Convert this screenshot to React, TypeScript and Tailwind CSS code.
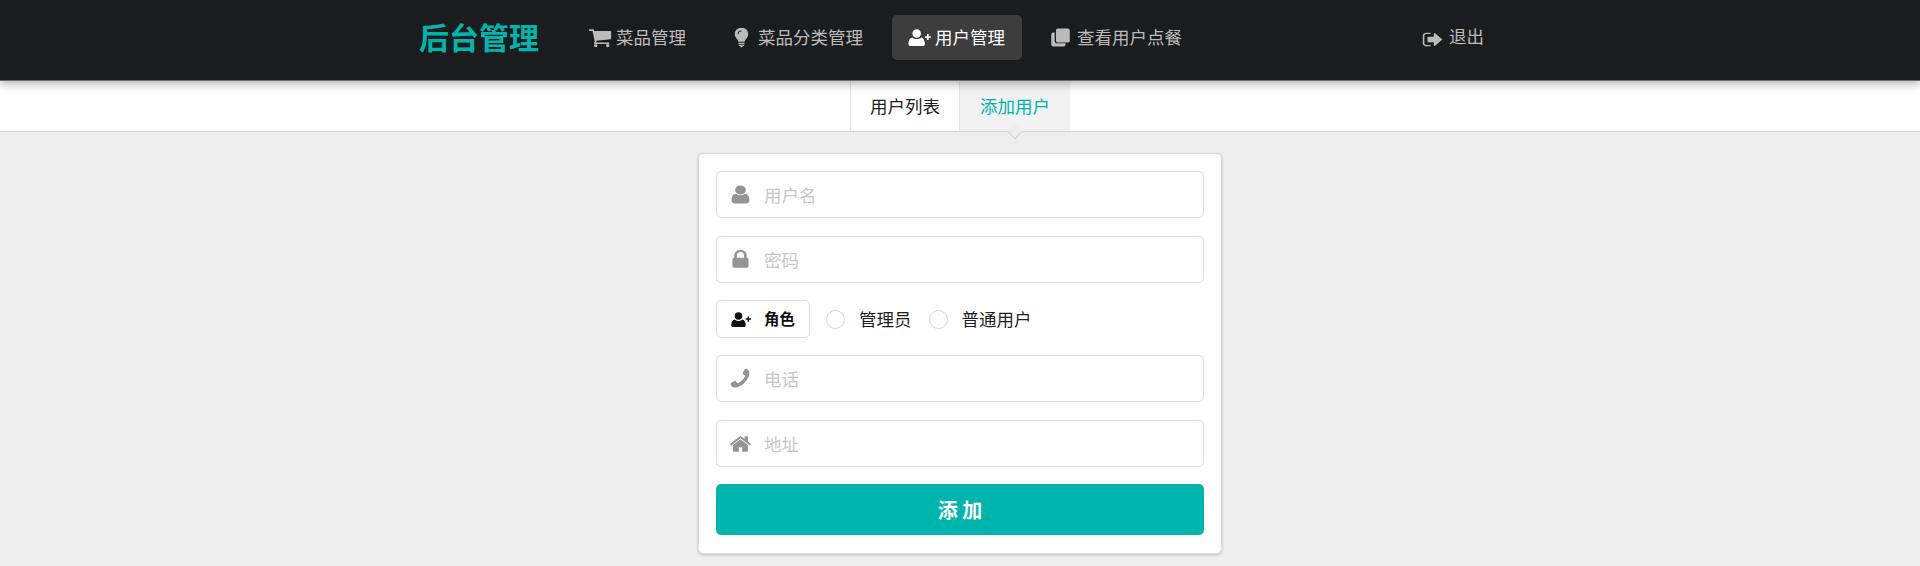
import React from "react";

const P = {
  user: "M1536 1399q0 109-62.5 187t-150.5 78h-854q-88 0-150.5-78t-62.5-187q0-85 8.5-160.5t31.5-152 58.5-131 94-89 134.5-34.5q131 128 313 128t313-128q76 0 134.5 34.5t94 89 58.5 131 31.5 152 8.5 160.5zm-256-887q0 159-112.5 271.5t-271.5 112.5-271.5-112.5-112.5-271.5 112.5-271.5 271.5-112.5 271.5 112.5 112.5 271.5z",
  lock: "M640 768h512v-192q0-106-75-181t-181-75-181 75-75 181v192zm832 96v576q0 40-28 68t-68 28h-960q-40 0-68-28t-28-68v-576q0-40 28-68t68-28h32v-192q0-184 132-316t316-132 316 132 132 316v192h32q40 0 68 28t28 68z",
  phone: "M1600 1240q0 27-10 70.5t-21 68.5q-21 50-122 106-94 51-186 51-27 0-53-3.5t-57.5-12.5-47-14.5-55.5-20.5-49-18q-98-35-175-83-127-79-264-216t-216-264q-48-77-83-175-3-9-18-49t-20.5-55.5-14.5-47-12.5-57.5-3.5-53q0-92 51-186 56-101 106-122 25-11 68.5-21t70.5-10q14 0 21 3 18 6 53 76 11 19 30 54t35 63.5 31 53.5q3 4 17.5 25t21.5 35.5 7 28.5q0 20-28.5 50t-62 55-62 53-28.5 46q0 9 5 22.5t8.5 20.5 14 24 11.5 19q76 137 174 235t235 174q2 1 19 11.5t24 14 20.5 8.5 22.5 5q18 0 46-28.5t53-62 55-62 50-28.5q14 0 28.5 7t35.5 21.5 25 17.5q25 15 53.5 31t63.5 35 54 30q70 35 76 53 3 7 3 21z",
  home: "M1472 992v480q0 26-19 45t-45 19h-384v-384h-256v384h-384q-26 0-45-19t-19-45v-480q0-1 .5-3t.5-3l575-474 575 474q1 2 1 6zm223-69l-62 74q-8 9-21 11h-3q-13 0-21-7l-692-577-692 577q-12 8-24 7-13-2-21-11l-62-74q-8-10-7-23.5t11-21.5l719-599q32-26 76-26t76 26l244 204v-195q0-14 9-23t23-9h192q14 0 23 9t9 23v408l219 182q10 8 11 21.5t-7 23.5z",
  cart: "M704 1536q0 52-38 90t-90 38-90-38-38-90 38-90 90-38 90 38 38 90zm896 0q0 52-38 90t-90 38-90-38-38-90 38-90 90-38 90 38 38 90zm128-1088v512q0 24-16.5 42.5t-40.5 21.5l-1044 122q13 60 13 70 0 16-24 64h920q26 0 45 19t19 45-19 45-45 19h-1024q-26 0-45-19t-19-45q0-11 8-31.5t16-36 21.5-40 15.5-29.5l-177-823h-204q-26 0-45-19t-19-45 19-45 45-19h256q16 0 28.5 6.5t19.5 15.5 13 24.5 8 26 5.5 29.5 4.5 26h1201q26 0 45 19t19 45z",
  signout: "M704 1440q0 4 1 20t.5 26.5-3 23.5-10 19.5-20.5 6.5h-320q-119 0-203.5-84.5t-84.500-203.500v-704q0-119 84.500-203.500t203.500-84.500h320q13 0 22.500 9.500t9.500 22.500q0 4 1 20t.5 26.500-3 23.500-10 19.500-20.500 6.500h-320q-66 0-113 47t-47 113v704q0 66 47 113t113 47h312l11.500 1 11.500 3 8 5.500 7 9 2 13.500zm928-544q0 26-19 45l-544 544q-19 19-45 19t-45-19-19-45v-288h-448q-26 0-45-19t-19-45v-384q0-26 19-45t45-19h448v-288q0-26 19-45t45-19 45 19l544 544q19 19 19 45z",
};

function Ico({ d, className }: { d: string; className: string }) {
  return (
    <svg viewBox="0 0 1792 1792" preserveAspectRatio="none" className={className} fill="currentColor" aria-hidden="true">
      <path d={d} />
    </svg>
  );
}

function UserPlus({ className }: { className: string }) {
  return (
    <svg viewBox="0 0 24 18" className={className} fill="currentColor" aria-hidden="true">
      <circle cx="9" cy="4.700" r="4.500" />
      <path d="M0.300 15.800c0-3.300 1.300-6.300 3.900-6.900 1.200 1.100 2.900 1.800 4.800 1.800s3.600-.7 4.800-1.800c2.600.6 3.900 3.600 3.900 6.900 0 1.300-.9 2.200-2.100 2.200H2.400c-1.200 0-2.100-.9-2.100-2.200z" />
      <path d="M19.900 5.400h1.800v2.200h2.200v1.800h-2.200v2.200h-1.800V9.400h-2.200V7.600h2.200z" />
    </svg>
  );
}

function Bulb({ className }: { className: string }) {
  return (
    <svg viewBox="0 0 20 28" className={className} fill="currentColor" aria-hidden="true">
      <path d="M10 1C4.800 1 1 4.700 1 9.400c0 2.600 1.100 4.300 2.400 5.900 1.100 1.400 2.200 2.700 2.400 4.400h8.400c.2-1.700 1.300-3 2.400-4.400C17.900 13.700 19 12 19 9.400 19 4.700 15.200 1 10 1zM5.600 9.200c-.4 0-.7-.3-.7-.7 0-2.300 2.200-3.800 4.400-3.800.4 0 .7.300.7.700s-.3.700-.7.700c-1.500 0-3 .9-3 2.400 0 .4-.3.700-.7.700z" fillRule="evenodd" />
      <path d="M6 21h8v1.800H6zM6 23.500h8c0 1-.8 1.700-1.700 1.700h-.5C11.400 26.300 10.700 27 10 27s-1.400-.7-1.800-1.800h-.5c-.9 0-1.700-.7-1.700-1.700z" />
    </svg>
  );
}

function Files({ className }: { className: string }) {
  return (
    <svg viewBox="0 0 18 18" className={className} fill="currentColor" aria-hidden="true">
      <path d="M6.500 0.500h9.500c1 0 1.800.8 1.800 1.800v9.700c0 1-.8 1.800-1.800 1.800H6.500c-1 0-1.800-.8-1.800-1.800V2.300c0-1 .8-1.800 1.800-1.800z" />
      <path d="M3.500 4.300v8.200c0 1.100.9 2 2 2h8.300v1.200c0 1-.8 1.800-1.800 1.800H2c-1 0-1.800-.8-1.800-1.800V6.100c0-1 .8-1.800 1.800-1.800z" />
    </svg>
  );
}

function NavItem({ icon, label, active }: { icon: React.ReactNode; label: string; active?: boolean }) {
  return (
    <a
      className={
        active
          ? "flex h-[45px] items-center rounded-[5px] bg-[#3d3d3e] pl-4 pr-[17px] text-white"
          : "flex h-[45px] items-center rounded-[5px] pl-4 pr-[17px] text-[#bbbbbb]"
      }
    >
      <span className="flex w-[27px] shrink-0 items-center justify-start">{icon}</span>
      <span>{label}</span>
    </a>
  );
}

function Field({ icon, placeholder }: { icon: React.ReactNode; placeholder: string }) {
  return (
    <div className="relative h-[47px]">
      <span className="absolute left-0 top-0 flex h-full w-[48px] items-center justify-center text-[#949494]">{icon}</span>
      <input
        placeholder={placeholder}
        className="h-full w-full rounded-[5px] border border-[#dfdfdf] bg-white pl-[47px] pr-4 text-[17.5px] text-black outline-none placeholder:text-[#c7c7c7]"
      />
    </div>
  );
}

function Radio({ label }: { label: string }) {
  return (
    <label className="flex items-center gap-[14px] text-[17.5px] text-[#1f1f1f]">
      <span className="h-[19px] w-[19px] rounded-full border border-[#d8d8d8] bg-white" />
      <span>{label}</span>
    </label>
  );
}

export default function App() {
  return (
    <div className="min-h-screen bg-[#eeeeee] font-['Noto_Sans_CJK_SC','Noto_Sans',sans-serif]">
      <header className="relative z-10 h-[81px] border-b border-[#6b6b6b] bg-[#1b1c1d] pb-[5px] shadow-[0_2px_10px_rgba(0,0,0,0.35)]">
        <nav className="mx-auto flex h-full w-[1082px] items-center text-[17.5px]">
          <span className="mr-[18px] w-[136px] pb-[3px] text-[30px] font-bold leading-none text-[#00b5ad]">后台管理</span>
          <div className="flex items-center gap-[12px]">
            <NavItem icon={<Ico d={P.cart} className="ml-[-1px] h-[23px] w-[24px]" />} label="菜品管理" />
            <NavItem icon={<Bulb className="ml-[3px] h-[21px] w-[15px]" />} label="菜品分类管理" />
            <NavItem icon={<UserPlus className="h-[17px] w-[23px]" />} label="用户管理" active />
            <NavItem icon={<Files className="ml-[1px] h-[19px] w-[19px]" />} label="查看用户点餐" />
          </div>
          <a className="ml-[223px] flex items-center text-[#bbbbbb]">
            <Ico d={P.signout} className="mr-[5px] mt-[4px] h-[19px] w-[22px]" />
            <span className="mb-[2px]">退出</span>
          </a>
        </nav>
      </header>

      <div className="flex h-[51px] justify-center border-b border-[#d4d4d5] bg-white text-[17.5px]">
        <a className="flex h-[50px] items-center border-x border-[#e3e3e3] px-[19px] text-[#222222]">用户列表</a>
        <a className="relative flex h-[50px] items-center bg-[#f2f2f2] px-[20px] text-[#00b5ad]">
          添加用户
          <span className="absolute bottom-[-6px] left-1/2 h-[11px] w-[11px] -translate-x-1/2 rotate-45 border-b border-r border-[#d4d4d5] bg-[#eeeeee]" />
        </a>
      </div>

      <main className="flex justify-center pt-[21px]">
        <form className="w-[524px] rounded-[5px] border border-[#dcdcdc] bg-white p-[17px] pb-[18px] shadow-[0_1px_3px_rgba(0,0,0,0.2)]">
          <div className="flex flex-col">
            <Field icon={<Ico d={P.user} className="h-[21px] w-[25px]" />} placeholder="用户名" />
            <div className="mt-[18px]">
              <Field icon={<Ico d={P.lock} className="h-[23px] w-[25px]" />} placeholder="密码" />
            </div>
            <div className="mt-[17px] flex h-[38px] items-center">
              <div className="flex h-full w-[94px] items-center rounded-[5px] border border-[#dfdfdf] pl-[14px] text-[15.4px] font-bold text-[#111111]">
                <UserPlus className="mr-[13px] h-[15px] w-[20px]" />
                <span>角色</span>
              </div>
              <div className="ml-[16px] flex items-center gap-[17px]">
                <Radio label="管理员" />
                <Radio label="普通用户" />
              </div>
            </div>
            <div className="mt-[17px]">
              <Field icon={<Ico d={P.phone} className="h-[24px] w-[24px] -scale-x-100" />} placeholder="电话" />
            </div>
            <div className="mt-[18px]">
              <Field icon={<Ico d={P.home} className="h-[22px] w-[23px]" />} placeholder="地址" />
            </div>
            <button
              type="button"
              className="mt-[17px] h-[51px] w-full rounded-[5px] bg-[#00b5ad] text-[20px] font-bold text-white"
            >
              添 加
            </button>
          </div>
        </form>
      </main>
    </div>
  );
}
